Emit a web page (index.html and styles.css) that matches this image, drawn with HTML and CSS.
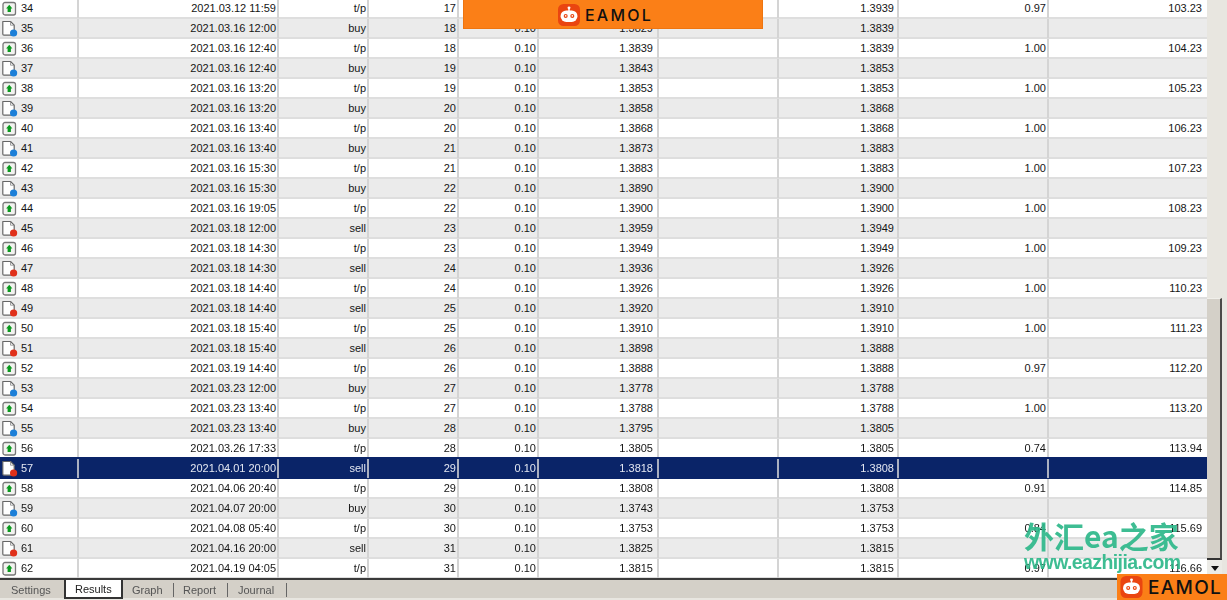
FILE: index.html
```html
<!DOCTYPE html>
<html lang="en">
<head>
<meta charset="utf-8">
<title>Results</title>
<link rel="stylesheet" href="styles.css">
</head>
<body>
<svg class="defs" width="0" height="0" aria-hidden="true">
  <symbol id="tp" viewBox="0 0 17 17"><rect x="2" y="2.5" width="12.5" height="12.5" rx="2" fill="#f3f3f0" stroke="#777" stroke-width="1.3"/><path d="M8.25 4.8 11.4 8.4H9.9V12H6.6V8.4H5.1z" fill="#0a9a1e"/></symbol>
  <symbol id="buy" viewBox="0 0 17 17"><path d="M1.8 1.5h7.7L13.2 5.2v10H3a1.2 1.2 0 0 1-1.2-1.2z" fill="#fff" stroke="#666" stroke-width="1.2" stroke-linejoin="round"/><path d="M9.5 1.5v3.7h3.7" fill="none" stroke="#888" stroke-width=".8"/><circle cx="12.6" cy="13" r="3.6" fill="#1c7fd8"/></symbol>
  <symbol id="sell" viewBox="0 0 17 17"><path d="M1.8 1.5h7.7L13.2 5.2v10H3a1.2 1.2 0 0 1-1.2-1.2z" fill="#fff" stroke="#666" stroke-width="1.2" stroke-linejoin="round"/><path d="M9.5 1.5v3.7h3.7" fill="none" stroke="#888" stroke-width=".8"/><circle cx="12.6" cy="13" r="3.6" fill="#e0301a"/></symbol>
  <symbol id="bot" viewBox="0 0 24 24"><rect width="24" height="24" rx="6" fill="#ea4510"/><circle cx="12" cy="4.2" r="1.6" fill="#fff"/><rect x="11.2" y="4.6" width="1.6" height="3" fill="#fff"/><rect x="2.8" y="7" width="18.4" height="12.5" rx="6.2" fill="#fff"/><circle cx="8.4" cy="13" r="2.2" fill="#ea4510"/><circle cx="15.6" cy="13" r="2.2" fill="#ea4510"/><circle cx="8.4" cy="13" r=".9" fill="#fff"/><circle cx="15.6" cy="13" r=".9" fill="#fff"/></symbol>
</svg>

<div class="main">
  <div class="table">
    <div class="row"><span class="c n"><svg class="ic"><use href="#tp"/></svg>34</span><span class="c">2021.03.12 11:59</span><span class="c">t/p</span><span class="c">17</span><span class="c">0.10</span><span class="c p">1.3939</span><span class="c"></span><span class="c t">1.3939</span><span class="c">0.97</span><span class="c b">103.23</span></div>
    <div class="row"><span class="c n"><svg class="ic"><use href="#buy"/></svg>35</span><span class="c">2021.03.16 12:00</span><span class="c">buy</span><span class="c">18</span><span class="c">0.10</span><span class="c p">1.3829</span><span class="c"></span><span class="c t">1.3839</span><span class="c"></span><span class="c b"></span></div>
    <div class="row"><span class="c n"><svg class="ic"><use href="#tp"/></svg>36</span><span class="c">2021.03.16 12:40</span><span class="c">t/p</span><span class="c">18</span><span class="c">0.10</span><span class="c p">1.3839</span><span class="c"></span><span class="c t">1.3839</span><span class="c">1.00</span><span class="c b">104.23</span></div>
    <div class="row"><span class="c n"><svg class="ic"><use href="#buy"/></svg>37</span><span class="c">2021.03.16 12:40</span><span class="c">buy</span><span class="c">19</span><span class="c">0.10</span><span class="c p">1.3843</span><span class="c"></span><span class="c t">1.3853</span><span class="c"></span><span class="c b"></span></div>
    <div class="row"><span class="c n"><svg class="ic"><use href="#tp"/></svg>38</span><span class="c">2021.03.16 13:20</span><span class="c">t/p</span><span class="c">19</span><span class="c">0.10</span><span class="c p">1.3853</span><span class="c"></span><span class="c t">1.3853</span><span class="c">1.00</span><span class="c b">105.23</span></div>
    <div class="row"><span class="c n"><svg class="ic"><use href="#buy"/></svg>39</span><span class="c">2021.03.16 13:20</span><span class="c">buy</span><span class="c">20</span><span class="c">0.10</span><span class="c p">1.3858</span><span class="c"></span><span class="c t">1.3868</span><span class="c"></span><span class="c b"></span></div>
    <div class="row"><span class="c n"><svg class="ic"><use href="#tp"/></svg>40</span><span class="c">2021.03.16 13:40</span><span class="c">t/p</span><span class="c">20</span><span class="c">0.10</span><span class="c p">1.3868</span><span class="c"></span><span class="c t">1.3868</span><span class="c">1.00</span><span class="c b">106.23</span></div>
    <div class="row"><span class="c n"><svg class="ic"><use href="#buy"/></svg>41</span><span class="c">2021.03.16 13:40</span><span class="c">buy</span><span class="c">21</span><span class="c">0.10</span><span class="c p">1.3873</span><span class="c"></span><span class="c t">1.3883</span><span class="c"></span><span class="c b"></span></div>
    <div class="row"><span class="c n"><svg class="ic"><use href="#tp"/></svg>42</span><span class="c">2021.03.16 15:30</span><span class="c">t/p</span><span class="c">21</span><span class="c">0.10</span><span class="c p">1.3883</span><span class="c"></span><span class="c t">1.3883</span><span class="c">1.00</span><span class="c b">107.23</span></div>
    <div class="row"><span class="c n"><svg class="ic"><use href="#buy"/></svg>43</span><span class="c">2021.03.16 15:30</span><span class="c">buy</span><span class="c">22</span><span class="c">0.10</span><span class="c p">1.3890</span><span class="c"></span><span class="c t">1.3900</span><span class="c"></span><span class="c b"></span></div>
    <div class="row"><span class="c n"><svg class="ic"><use href="#tp"/></svg>44</span><span class="c">2021.03.16 19:05</span><span class="c">t/p</span><span class="c">22</span><span class="c">0.10</span><span class="c p">1.3900</span><span class="c"></span><span class="c t">1.3900</span><span class="c">1.00</span><span class="c b">108.23</span></div>
    <div class="row"><span class="c n"><svg class="ic"><use href="#sell"/></svg>45</span><span class="c">2021.03.18 12:00</span><span class="c">sell</span><span class="c">23</span><span class="c">0.10</span><span class="c p">1.3959</span><span class="c"></span><span class="c t">1.3949</span><span class="c"></span><span class="c b"></span></div>
    <div class="row"><span class="c n"><svg class="ic"><use href="#tp"/></svg>46</span><span class="c">2021.03.18 14:30</span><span class="c">t/p</span><span class="c">23</span><span class="c">0.10</span><span class="c p">1.3949</span><span class="c"></span><span class="c t">1.3949</span><span class="c">1.00</span><span class="c b">109.23</span></div>
    <div class="row"><span class="c n"><svg class="ic"><use href="#sell"/></svg>47</span><span class="c">2021.03.18 14:30</span><span class="c">sell</span><span class="c">24</span><span class="c">0.10</span><span class="c p">1.3936</span><span class="c"></span><span class="c t">1.3926</span><span class="c"></span><span class="c b"></span></div>
    <div class="row"><span class="c n"><svg class="ic"><use href="#tp"/></svg>48</span><span class="c">2021.03.18 14:40</span><span class="c">t/p</span><span class="c">24</span><span class="c">0.10</span><span class="c p">1.3926</span><span class="c"></span><span class="c t">1.3926</span><span class="c">1.00</span><span class="c b">110.23</span></div>
    <div class="row"><span class="c n"><svg class="ic"><use href="#sell"/></svg>49</span><span class="c">2021.03.18 14:40</span><span class="c">sell</span><span class="c">25</span><span class="c">0.10</span><span class="c p">1.3920</span><span class="c"></span><span class="c t">1.3910</span><span class="c"></span><span class="c b"></span></div>
    <div class="row"><span class="c n"><svg class="ic"><use href="#tp"/></svg>50</span><span class="c">2021.03.18 15:40</span><span class="c">t/p</span><span class="c">25</span><span class="c">0.10</span><span class="c p">1.3910</span><span class="c"></span><span class="c t">1.3910</span><span class="c">1.00</span><span class="c b">111.23</span></div>
    <div class="row"><span class="c n"><svg class="ic"><use href="#sell"/></svg>51</span><span class="c">2021.03.18 15:40</span><span class="c">sell</span><span class="c">26</span><span class="c">0.10</span><span class="c p">1.3898</span><span class="c"></span><span class="c t">1.3888</span><span class="c"></span><span class="c b"></span></div>
    <div class="row"><span class="c n"><svg class="ic"><use href="#tp"/></svg>52</span><span class="c">2021.03.19 14:40</span><span class="c">t/p</span><span class="c">26</span><span class="c">0.10</span><span class="c p">1.3888</span><span class="c"></span><span class="c t">1.3888</span><span class="c">0.97</span><span class="c b">112.20</span></div>
    <div class="row"><span class="c n"><svg class="ic"><use href="#buy"/></svg>53</span><span class="c">2021.03.23 12:00</span><span class="c">buy</span><span class="c">27</span><span class="c">0.10</span><span class="c p">1.3778</span><span class="c"></span><span class="c t">1.3788</span><span class="c"></span><span class="c b"></span></div>
    <div class="row"><span class="c n"><svg class="ic"><use href="#tp"/></svg>54</span><span class="c">2021.03.23 13:40</span><span class="c">t/p</span><span class="c">27</span><span class="c">0.10</span><span class="c p">1.3788</span><span class="c"></span><span class="c t">1.3788</span><span class="c">1.00</span><span class="c b">113.20</span></div>
    <div class="row"><span class="c n"><svg class="ic"><use href="#buy"/></svg>55</span><span class="c">2021.03.23 13:40</span><span class="c">buy</span><span class="c">28</span><span class="c">0.10</span><span class="c p">1.3795</span><span class="c"></span><span class="c t">1.3805</span><span class="c"></span><span class="c b"></span></div>
    <div class="row"><span class="c n"><svg class="ic"><use href="#tp"/></svg>56</span><span class="c">2021.03.26 17:33</span><span class="c">t/p</span><span class="c">28</span><span class="c">0.10</span><span class="c p">1.3805</span><span class="c"></span><span class="c t">1.3805</span><span class="c">0.74</span><span class="c b">113.94</span></div>
    <div class="row sel"><span class="c n"><svg class="ic"><use href="#sell"/></svg>57</span><span class="c">2021.04.01 20:00</span><span class="c">sell</span><span class="c">29</span><span class="c">0.10</span><span class="c p">1.3818</span><span class="c"></span><span class="c t">1.3808</span><span class="c"></span><span class="c b"></span></div>
    <div class="row"><span class="c n"><svg class="ic"><use href="#tp"/></svg>58</span><span class="c">2021.04.06 20:40</span><span class="c">t/p</span><span class="c">29</span><span class="c">0.10</span><span class="c p">1.3808</span><span class="c"></span><span class="c t">1.3808</span><span class="c">0.91</span><span class="c b">114.85</span></div>
    <div class="row"><span class="c n"><svg class="ic"><use href="#buy"/></svg>59</span><span class="c">2021.04.07 20:00</span><span class="c">buy</span><span class="c">30</span><span class="c">0.10</span><span class="c p">1.3743</span><span class="c"></span><span class="c t">1.3753</span><span class="c"></span><span class="c b"></span></div>
    <div class="row"><span class="c n"><svg class="ic"><use href="#tp"/></svg>60</span><span class="c">2021.04.08 05:40</span><span class="c">t/p</span><span class="c">30</span><span class="c">0.10</span><span class="c p">1.3753</span><span class="c"></span><span class="c t">1.3753</span><span class="c">0.84</span><span class="c b">115.69</span></div>
    <div class="row"><span class="c n"><svg class="ic"><use href="#sell"/></svg>61</span><span class="c">2021.04.16 20:00</span><span class="c">sell</span><span class="c">31</span><span class="c">0.10</span><span class="c p">1.3825</span><span class="c"></span><span class="c t">1.3815</span><span class="c"></span><span class="c b"></span></div>
    <div class="row"><span class="c n"><svg class="ic"><use href="#tp"/></svg>62</span><span class="c">2021.04.19 04:05</span><span class="c">t/p</span><span class="c">31</span><span class="c">0.10</span><span class="c p">1.3815</span><span class="c"></span><span class="c t">1.3815</span><span class="c">0.97</span><span class="c b">116.66</span></div>
  </div>
  <div class="scrollbar">
    <div class="thumb"></div>
    <div class="down"><span class="arrow"></span></div>
  </div>
</div>

<div class="tabs">
  <span class="tab first">Settings</span>
  <span class="tab active">Results</span>
  <span class="tab sep">Graph</span>
  <span class="tab sep">Report</span>
  <span class="tab sep">Journal</span>
</div>

<div class="banner"><svg class="logo-ic"><use href="#bot"/></svg><span class="logo-tx">EAMOL</span></div>
<div class="corner"><svg class="logo-ic big"><use href="#bot"/></svg><span class="logo-tx big">EAMOL</span></div>
<div class="mark"><div class="mark-cn">外汇ea之家</div><div class="mark-en">www.eazhijia.com</div></div>
</body>
</html>
```
FILE: styles.css
```css
* { box-sizing: border-box; }
html, body { margin: 0; height: 600px; overflow: hidden; }
body {
  display: flex;
  flex-direction: column;
  width: 1227px;
  background: #e8e6e0;
  font-family: "Liberation Sans", Arial, sans-serif;
  font-size: 11px;
  color: #151515;
}
.defs { position: absolute; }
.main { display: flex; height: 578px; overflow: hidden; }
.table { width: 1207px; margin-top: -1px; filter: blur(0.45px); }
.row {
  display: grid;
  grid-template-columns: 79px 200px 90px 90px 80px 120px 120px 120px 150px 158px;
  height: 20px;
  background: #fff;
  border-bottom: 2px solid #dedede;
}
.row:nth-child(even) { background: #ebebeb; }
.row.sel {
  position: relative;
  background: #0a2468;
  color: #e4e8f2;
  border-bottom-color: #0a2468;
  box-shadow: 0 -2px 0 #0a2468;
}
.c {
  display: block;
  line-height: 19px;
  text-align: right;
  padding-right: 1px;
  border-right: 2px solid #d4d4d4;
  white-space: nowrap;
}
.sel .c { border-right-color: #aab0c0; }
.n {
  display: flex;
  align-items: center;
  gap: 3px;
  text-align: left;
  padding-left: 1px;
}
.p { padding-right: 4px; }
.t { padding-right: 3px; }
.b { border-right: 0; padding-right: 5px; }
.ic { width: 17px; height: 17px; flex: none; }

.scrollbar {
  display: flex;
  flex-direction: column;
  width: 20px;
  background: #e8e6e0;
  padding-top: 298px;
}
.thumb {
  width: 15px;
  height: 262px;
  background: #d4d0c8;
  border-right: 2px solid #4a4a48;
  border-bottom: 2px solid #333;
  border-top: 1px solid #f0efea;
}
.down {
  display: flex;
  align-items: center;
  justify-content: center;
  width: 15px;
  height: 16px;
  background: #ecebe6;
}
.arrow {
  width: 0;
  height: 0;
  border-left: 4.5px solid transparent;
  border-right: 4.5px solid transparent;
  border-top: 5px solid #111;
}

.tabs {
  display: flex;
  align-items: flex-start;
  height: 22px;
  padding-top: 2px;
  background: linear-gradient(#d4d0c8 0 18px, #e8e6e0 18px);
  border-top: 2px solid #3a3a3a;
  color: #555;
  filter: blur(0.3px);
}
.tab { display: block; height: 17px; line-height: 16px; white-space: nowrap; }
.first { width: 64px; padding-left: 11px; }
.active {
  width: 59px;
  margin-top: -2px;
  height: 19px;
  padding-left: 9px;
  line-height: 18px;
  background: #fff;
  color: #222;
  border: 2px solid #333;
  border-top: 0;
}
.sep {
  padding: 0 12px 0 9px;
  border-right: 1px solid #666;
  height: 14px;
  margin-top: 1px;
  line-height: 14px;
}
.sep:nth-child(3) { width: 51px; }
.sep:nth-child(4) { width: 54px; }
.sep:nth-child(5) { width: 59px; padding-left: 10px; }

.banner {
  position: absolute;
  left: 463px;
  top: 0;
  width: 300px;
  height: 29px;
  display: flex;
  align-items: center;
  gap: 5px;
  padding: 1px 0 0 94px;
  background: #fb7f17;
  border: 1px solid #ee7510;
  border-top: 0;
}
.corner {
  position: absolute;
  right: 0;
  bottom: 0;
  width: 110px;
  height: 26px;
  display: flex;
  align-items: center;
  gap: 5px;
  padding-left: 3px;
  background: #fb7f17;
}
.logo-ic { width: 22px; height: 22px; flex: none; }
.logo-ic.big { width: 23px; height: 22px; }
.logo-tx {
  font-family: "Inter", "Liberation Sans", sans-serif;
  font-size: 16px;
  font-weight: 500;
  letter-spacing: 2.2px;
  color: #111;
  line-height: 1;
}
.logo-tx.big { font-size: 19px; letter-spacing: 1.3px; }

.mark {
  position: absolute;
  left: 1024px;
  top: 518px;
  color: #2eb88a;
  opacity: 0.92;
  font-weight: 700;
  white-space: nowrap;
  filter: blur(0.3px);
}
.mark-cn {
  font-family: "Noto Sans CJK SC", "Liberation Sans", sans-serif;
  font-size: 30px;
  line-height: 34px;
}
.mark-en {
  font-family: "Liberation Sans", sans-serif;
  font-size: 19.5px;
  line-height: 20px;
  letter-spacing: -0.6px;
}
```
